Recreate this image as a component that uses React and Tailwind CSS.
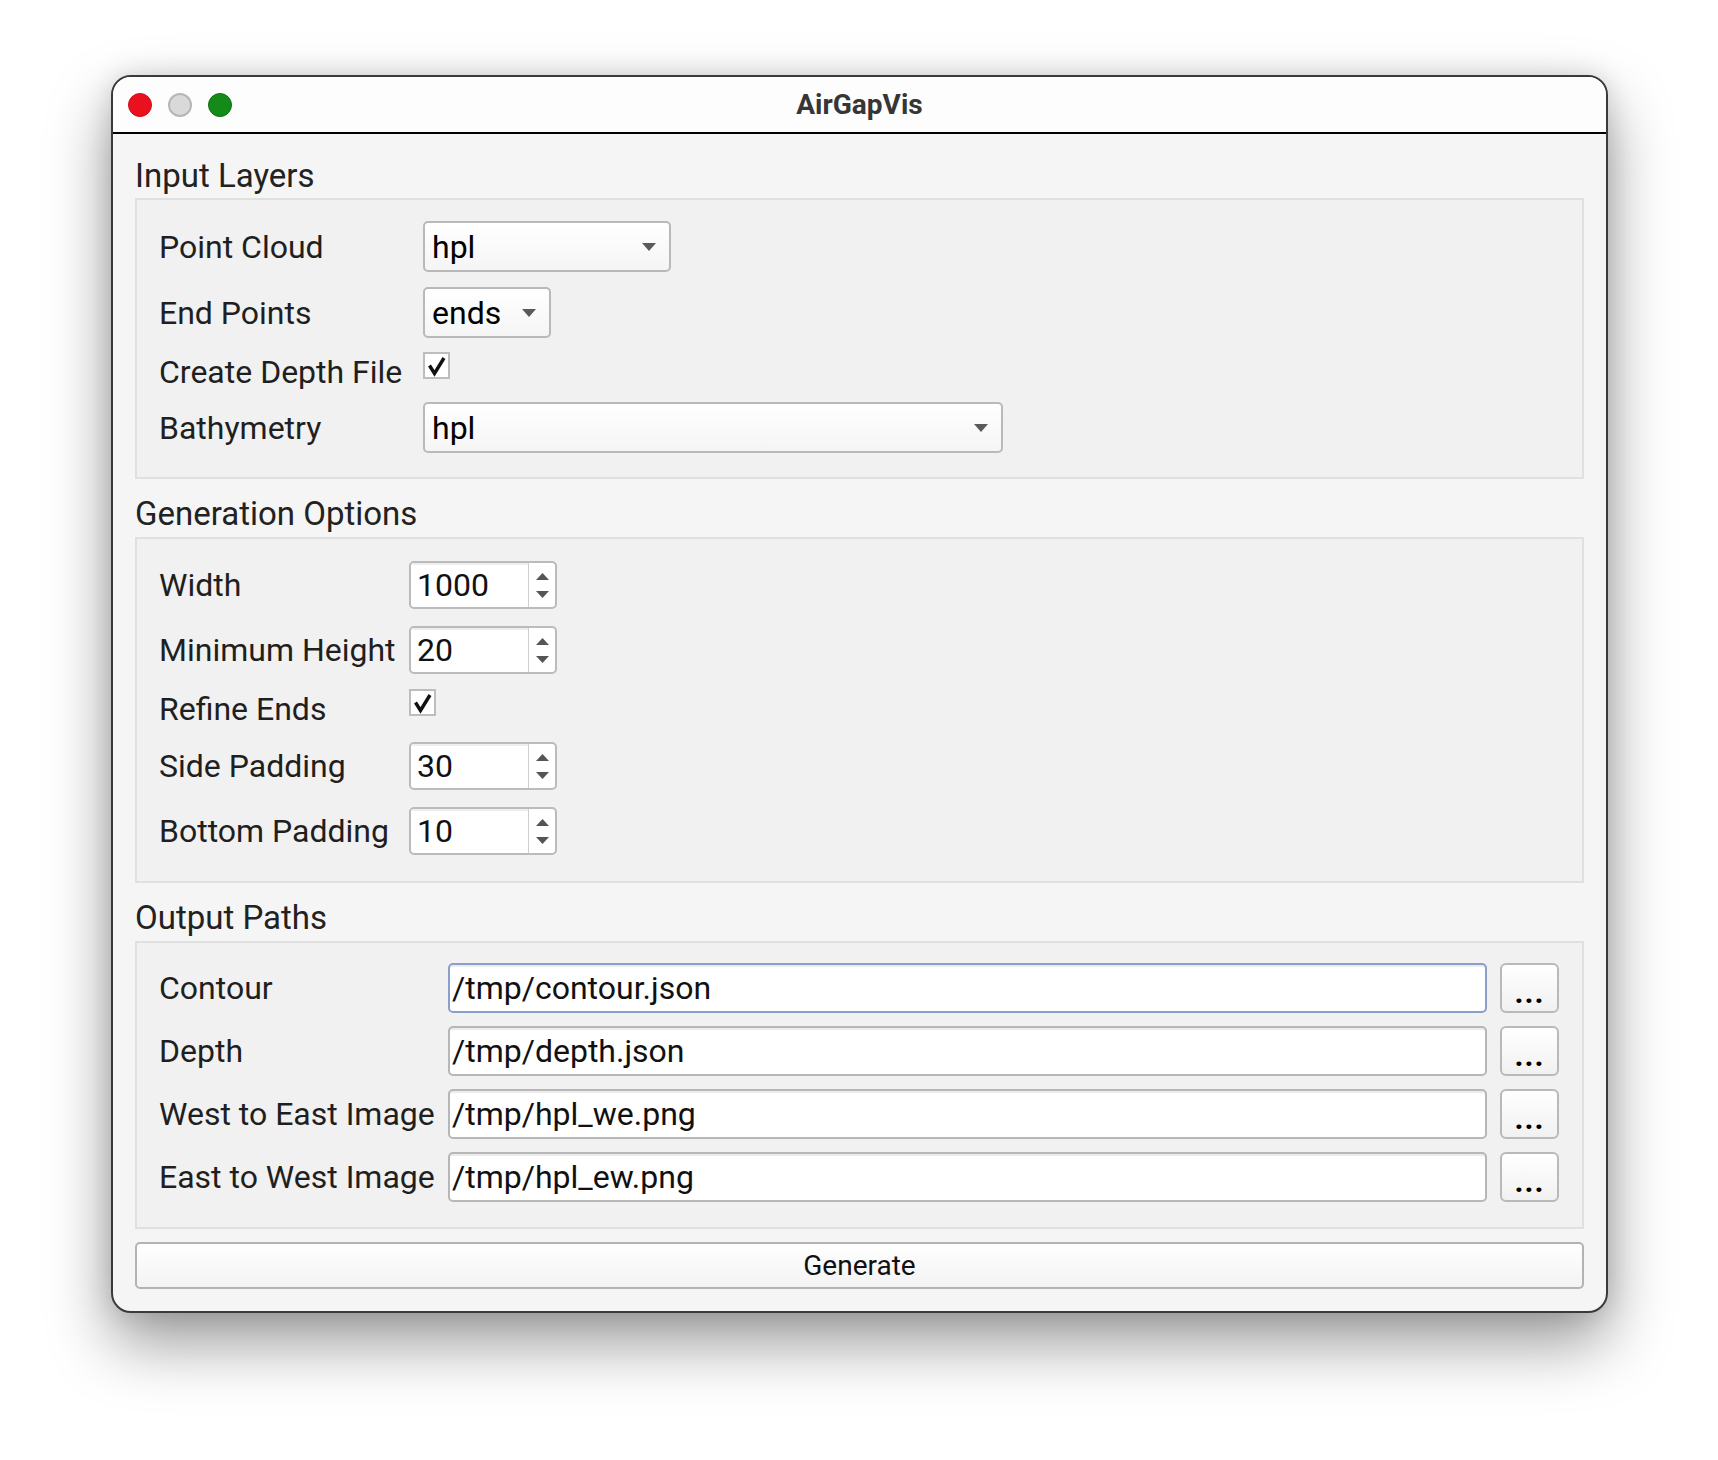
import React from 'react'

const ComboArrow = () => (
  <svg width="14" height="8" viewBox="0 0 14 8">
    <polygon points="0,0 14,0 7,8" fill="#5a5a5a" />
  </svg>
)

const Combo = ({ value, width }) => (
  <div
    className={`h-[51px] ${width} flex items-center justify-between pl-[7px] pr-[13px] rounded-[5px] border-2 border-[#b9b9b9] bg-linear-to-b from-white to-[#f5f5f5] text-black`}
  >
    <span>{value}</span>
    <ComboArrow />
  </div>
)

const Check = () => (
  <div className="w-[27px] h-[27px] border-2 border-[#bdbdbd] bg-white flex items-center justify-center">
    <svg width="23" height="23" viewBox="0 0 23 23">
      <path d="M4.5 11.5 L9.5 19.5 L19 4" stroke="#111" strokeWidth="3.4" fill="none" strokeLinejoin="miter" />
    </svg>
  </div>
)

const Spin = ({ value }) => (
  <div className="h-[48px] w-[148px] flex rounded-[5px] border-2 border-[#bbbbbb] bg-white overflow-hidden">
    <div className="w-[117px] pl-[6px] flex items-center shadow-[inset_0_2px_0_#eeeeee] text-[#111]">{value}</div>
    <div className="flex-1 border-l border-[#cfcfcf] flex flex-col items-center justify-center gap-[11px]">
      <svg width="13" height="7" viewBox="0 0 13 7">
        <polygon points="0,7 13,7 6.5,0" fill="#555" />
      </svg>
      <svg width="13" height="7" viewBox="0 0 13 7">
        <polygon points="0,0 13,0 6.5,7" fill="#555" />
      </svg>
    </div>
  </div>
)

const PathRow = ({ label, value, focused }) => (
  <div className="flex items-center h-[50px]">
    <div className="w-[289px] whitespace-nowrap">{label}</div>
    <div
      className={`flex-1 h-[50px] flex items-center pl-[2px] rounded-[5px] border-2 bg-white shadow-[inset_0_2px_0_#ececec] text-[#111] ${
        focused ? 'border-[#8c9fcb]' : 'border-[#b7b7b7]'
      }`}
    >
      {value}
    </div>
    <button className="ml-[13px] w-[59px] h-[50px] rounded-[6px] border-2 border-[#b9b9b9] bg-linear-to-b from-white to-[#f1f1f1] text-[31px] font-bold leading-none text-black pt-[8px] tracking-[1px]">
      ...
    </button>
  </div>
)

const GroupTitle = ({ children, className }) => (
  <div className={`h-[40px] leading-[40px] text-[#222] ${className}`}>{children}</div>
)

export default function App() {
  return (
    <div className="w-[1718px] h-[1460px] bg-white pl-[111px] pt-[75px] font-[family-name:Roboto,sans-serif]">
      <div className="w-[1497px] h-[1238px] rounded-[20px] border-2 border-[#3a3a3a] bg-[#f5f5f5] overflow-hidden flex flex-col shadow-[0_0_26px_rgba(0,0,0,0.13),0_30px_64px_rgba(0,0,0,0.4)]">
        {/* Title bar */}
        <div className="h-[57px] shrink-0 bg-[#fdfdfd] border-b-2 border-black grid grid-cols-[1fr_auto_1fr] items-center">
          <div className="flex items-center gap-[16px] pl-[15px]">
            <span className="w-[24px] h-[24px] rounded-full bg-[#ea101d] border border-[#cc0e1a]" />
            <span className="w-[24px] h-[24px] rounded-full bg-[#d9d9d9] border-2 border-[#b6b6b6]" />
            <span className="w-[24px] h-[24px] rounded-full bg-[#148a19] border border-[#0f6f13]" />
          </div>
          <div className="text-[28px] font-bold text-[#363636]">AirGapVis</div>
          <div />
        </div>

        {/* Body */}
        <div className="flex-1 flex flex-col px-[22px] text-[32px] text-[#1f1f1f]">
          <GroupTitle className="mt-[22px] text-[33px]">Input Layers</GroupTitle>
          <div className="mt-[2px] h-[281px] border-2 border-[#e0e0e0] bg-[#f1f1f1] pl-[22px] pt-[21px] flex flex-col">
            <div className="flex items-center">
              <div className="w-[264px]">Point Cloud</div>
              <Combo value="hpl" width="w-[248px]" />
            </div>
            <div className="flex items-center mt-[15px]">
              <div className="w-[264px]">End Points</div>
              <Combo value="ends" width="w-[128px]" />
            </div>
            <div className="flex items-start mt-[14px] h-[40px]">
              <div className="w-[264px] leading-[40px] whitespace-nowrap">Create Depth File</div>
              <Check />
            </div>
            <div className="flex items-center mt-[10px]">
              <div className="w-[264px]">Bathymetry</div>
              <Combo value="hpl" width="w-[580px]" />
            </div>
          </div>

          <GroupTitle className="mt-[15px] text-[33px]">Generation Options</GroupTitle>
          <div className="mt-[3px] h-[346px] border-2 border-[#e0e0e0] bg-[#f1f1f1] pl-[22px] pt-[22px] flex flex-col">
            <div className="flex items-center">
              <div className="w-[250px]">Width</div>
              <Spin value="1000" />
            </div>
            <div className="flex items-center mt-[17px]">
              <div className="w-[250px] whitespace-nowrap">Minimum Height</div>
              <Spin value="20" />
            </div>
            <div className="flex items-start mt-[15px] h-[40px]">
              <div className="w-[250px] leading-[40px]">Refine Ends</div>
              <Check />
            </div>
            <div className="flex items-center mt-[13px]">
              <div className="w-[250px]">Side Padding</div>
              <Spin value="30" />
            </div>
            <div className="flex items-center mt-[17px]">
              <div className="w-[250px] whitespace-nowrap">Bottom Padding</div>
              <Spin value="10" />
            </div>
          </div>

          <GroupTitle className="mt-[15px] text-[33px]">Output Paths</GroupTitle>
          <div className="mt-[3px] h-[288px] border-2 border-[#e0e0e0] bg-[#f1f1f1] pl-[22px] pr-[23px] pt-[20px] flex flex-col gap-[13px]">
            <PathRow label="Contour" value="/tmp/contour.json" focused />
            <PathRow label="Depth" value="/tmp/depth.json" />
            <PathRow label="West to East Image" value="/tmp/hpl_we.png" />
            <PathRow label="East to West Image" value="/tmp/hpl_ew.png" />
          </div>

          <button className="mt-[13px] h-[47px] w-full rounded-[5px] border-2 border-[#b3b3b3] bg-linear-to-b from-white to-[#f3f3f3] text-[28px] text-[#111]">
            Generate
          </button>
        </div>
      </div>
    </div>
  )
}
